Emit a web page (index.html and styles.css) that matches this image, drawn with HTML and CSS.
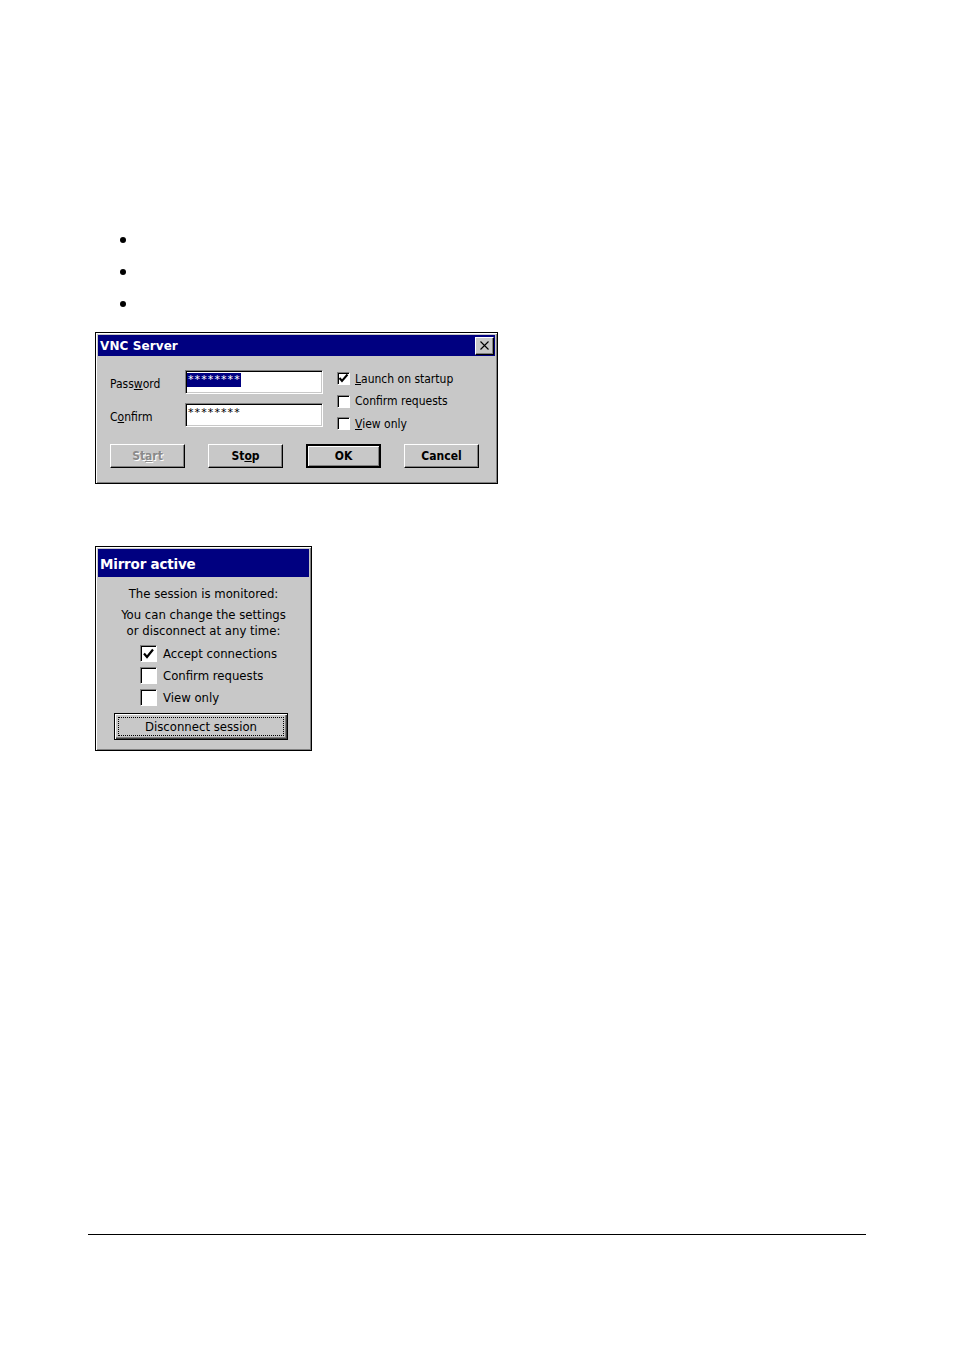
FILE: index.html
```html
<!DOCTYPE html>
<html>
<head>
<meta charset="utf-8">
<link rel="stylesheet" href="styles.css">
</head>
<body>
<div class="page">
  <ul class="bullets">
    <li></li>
    <li></li>
    <li></li>
  </ul>

  <div class="win vnc">
    <div class="titlebar">
      <span class="title">VNC Server</span>
      <span class="close">
        <svg width="11" height="11" viewBox="0 0 11 11"><path d="M1.5 1.5 L9.5 9.5 M9.5 1.5 L1.5 9.5" stroke="#000" stroke-width="1.1"/></svg>
      </span>
    </div>
    <div class="vnc-body">
      <div class="vnc-top">
        <div class="fields">
          <div class="field-row">
            <span class="lbl">Pass<u>w</u>ord</span>
            <span class="edit"><span class="sel">********</span></span>
          </div>
          <div class="field-row">
            <span class="lbl">C<u>o</u>nfirm</span>
            <span class="edit"><span class="plain">********</span></span>
          </div>
        </div>
        <div class="checks">
          <div class="chk-row"><span class="cb"><svg width="11" height="11" viewBox="0 0 11 11"><path d="M1.5 5 L4 8 L9.5 1.5" stroke="#000" stroke-width="2" fill="none"/></svg></span><span><u>L</u>aunch on startup</span></div>
          <div class="chk-row"><span class="cb"></span><span>Conf<u>i</u>rm requests</span></div>
          <div class="chk-row"><span class="cb"></span><span><u>V</u>iew only</span></div>
        </div>
      </div>
      <div class="btn-row">
        <span class="btn disabled">St<u>a</u>rt</span>
        <span class="btn">St<u>o</u>p</span>
        <span class="btn default">OK</span>
        <span class="btn">Cancel</span>
      </div>
    </div>
  </div>

  <div class="win mirror">
    <div class="titlebar big">
      <span class="title">Mirror active</span>
    </div>
    <div class="mirror-body">
      <p class="m-line first">The session is monitored:</p>
      <p class="m-line second">You can change the settings<br>or disconnect at any time:</p>
      <div class="m-checks">
        <div class="m-chk"><span class="mcb"><svg width="13" height="13" viewBox="0 0 13 13"><path d="M2 6.5 L5 10 L11 2.5" stroke="#000" stroke-width="2.2" fill="none"/></svg></span><span>Accept connections</span></div>
        <div class="m-chk"><span class="mcb"></span><span>Confirm requests</span></div>
        <div class="m-chk"><span class="mcb"></span><span>View only</span></div>
      </div>
      <div class="m-btn-wrap">
        <span class="m-btn"><span class="focus">Disconnect session</span></span>
      </div>
    </div>
  </div>

  <div class="rule"></div>
</div>
</body>
</html>
```

FILE: styles.css
```css
html, body {
  margin: 0;
  padding: 0;
  background: #fff;
}
.page {
  position: relative;
  width: 954px;
  height: 1350px;
  font-family: "DejaVu Sans Condensed", "DejaVu Sans", "Liberation Sans", sans-serif;
  color: #000;
}
.bullets {
  list-style: none;
  margin: 0;
  padding: 224px 0 0 0;
}
.bullets li {
  height: 32px;
  display: flex;
  align-items: center;
  padding-left: 120px;
}
.bullets li::before {
  content: "";
  width: 6px;
  height: 6px;
  border-radius: 50%;
  background: #000;
}

/* window frame */
.win {
  margin-left: 95px;
  box-sizing: border-box;
  background: #c8c8c8;
  border: 1px solid #000;
  padding: 2px;
  box-shadow: inset 1px 1px #fff, inset -1px -1px #808080;
}
.vnc {
  margin-top: 12px;
  width: 403px;
  height: 152px;
}
.mirror {
  margin-top: 62px;
  width: 217px;
  height: 205px;
}
.titlebar {
  height: 21px;
  background: #000080;
  color: #fff;
  display: flex;
  align-items: center;
  justify-content: space-between;
  padding: 0 1px 0 2px;
}
.title {
  font-family: "DejaVu Sans", "Liberation Sans", sans-serif;
  font-weight: bold;
  font-size: 12px;
  letter-spacing: 0.1px;
  padding-top: 1px;
}
.titlebar.big {
  height: 28px;
}
.titlebar.big .title {
  font-size: 13.5px;
  letter-spacing: -0.2px;
  padding-top: 2px;
}
.close {
  width: 19px;
  height: 18px;
  box-sizing: border-box;
  background: #c8c8c8;
  border: 1px solid;
  border-color: #fff #000 #000 #fff;
  box-shadow: inset -1px -1px #808080;
  display: flex;
  align-items: center;
  justify-content: center;
}

/* VNC body */
.vnc-body {
  padding: 14px 0 0 12px;
  font-size: 12px;
}
.vnc-top {
  display: flex;
  gap: 14px;
}
.fields {
  display: flex;
  flex-direction: column;
  gap: 9px;
}
.field-row {
  display: flex;
  align-items: center;
  height: 24px;
}
.lbl {
  width: 75px;
  padding-top: 4px;
}
.edit {
  width: 138px;
  height: 24px;
  box-sizing: border-box;
  background: #fff;
  border: 1px solid;
  border-color: #808080 #fff #fff #808080;
  box-shadow: inset 1px 1px #000, inset -1px -1px #c8c8c8;
  padding: 2px 0 0 1px;
  font-family: "DejaVu Sans", sans-serif;
  font-size: 11px;
  line-height: 13px;
}
.sel, .plain {
  display: inline-block;
  letter-spacing: 1.1px;
  padding: 0 0 1px 1px;
}
.sel {
  background: #000080;
  color: #fff;
}
.checks {
  display: flex;
  flex-direction: column;
  gap: 9.5px;
  padding-top: 2px;
}
.chk-row {
  display: flex;
  align-items: center;
  gap: 5px;
  height: 13px;
}
.cb {
  width: 13px;
  height: 13px;
  box-sizing: border-box;
  background: #fff;
  border: 1px solid;
  border-color: #808080 #fff #fff #808080;
  box-shadow: inset 1px 1px #000;
  display: flex;
  align-items: center;
  justify-content: center;
}
.btn-row {
  display: flex;
  gap: 23px;
  margin-top: 14px;
}
.btn {
  width: 75px;
  height: 24px;
  box-sizing: border-box;
  border: 1px solid;
  border-color: #fff #000 #000 #fff;
  box-shadow: inset -1px -1px #808080;
  display: flex;
  align-items: center;
  justify-content: center;
  font-weight: bold;
  font-size: 12px;
}
.btn.disabled {
  color: #8a8a8a;
  text-shadow: 1px 1px #fff;
}
.btn.default {
  border: 2px solid #000;
  box-shadow: inset 1px 1px #fff, inset -1px -1px #808080;
}

/* Mirror body */
.mirror-body {
  font-size: 13px;
  text-align: center;
}
.m-line {
  margin: 0;
}
.m-line.first {
  padding-top: 9px;
}
.m-line.second {
  padding-top: 6px;
  line-height: 16px;
}
.m-checks {
  display: flex;
  flex-direction: column;
  gap: 5px;
  padding: 6px 0 0 42px;
  text-align: left;
}
.m-chk {
  display: flex;
  align-items: center;
  gap: 6px;
  height: 17px;
}
.mcb {
  width: 17px;
  height: 17px;
  box-sizing: border-box;
  background: #fff;
  border: 1px solid;
  border-color: #808080 #fff #fff #808080;
  box-shadow: inset 1px 1px #000;
  display: flex;
  align-items: center;
  justify-content: center;
}
.m-btn-wrap {
  display: flex;
  padding: 7px 0 0 16px;
}
.m-btn {
  width: 174px;
  height: 27px;
  box-sizing: border-box;
  border: 1px solid #000;
  box-shadow: inset 1px 1px #fff, inset -1px -1px #404040, inset -2px -2px #808080;
  padding: 3px;
  display: flex;
}
.focus {
  flex: 1;
  border: 1px dotted #000;
  display: flex;
  align-items: center;
  justify-content: center;
}

.rule {
  position: absolute;
  left: 88px;
  top: 1234px;
  width: 778px;
  height: 1px;
  border-top: 1.5px solid #000;
}
```
